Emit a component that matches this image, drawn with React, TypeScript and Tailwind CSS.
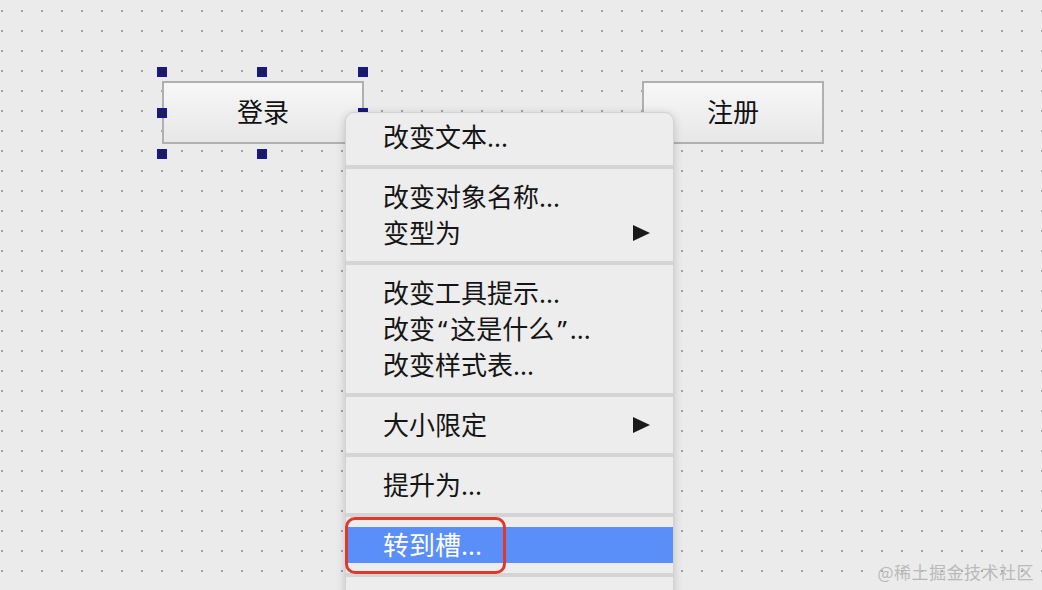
import React from 'react'

type Item = { label: string; submenu?: boolean; active?: boolean }

const sections: Item[][] = [
  [{ label: '改变文本...' }],
  [{ label: '改变对象名称...' }, { label: '变型为', submenu: true }],
  [{ label: '改变工具提示...' }, { label: '改变“这是什么”...' }, { label: '改变样式表...' }],
  [{ label: '大小限定', submenu: true }],
  [{ label: '提升为...' }],
  [{ label: '转到槽...', active: true }],
  [{ label: '' }],
]

const font = { fontFamily: '"Noto Sans", "Noto Sans CJK SC", sans-serif' }

// curly quotes get a little air around them, like the mac menu font
function Label({ text }: { text: string }) {
  const parts = text.split(/([“”])/)
  return (
    <span>
      {parts.map((p, i) =>
        p === '“' || p === '”' ? (
          <span key={i} className="px-[3px]">
            {p}
          </span>
        ) : (
          p
        )
      )}
    </span>
  )
}

function Handle({ className }: { className: string }) {
  return (
    <div className={`absolute w-[10px] h-[10px] bg-[#16169a] p-[2px] ${className}`}>
      <div className="w-full h-full bg-[#1e1e4a]" />
    </div>
  )
}

function FormButton({ label, className }: { label: string; className: string }) {
  return (
    <div
      className={`flex items-center justify-center border-2 border-[#b0b0b0] bg-gradient-to-b from-[#f7f7f7] to-[#e7e7e7] text-[26px] text-[#111] ${className}`}
    >
      {label}
    </div>
  )
}

function SubArrow() {
  return (
    <svg width="17" height="16" viewBox="0 0 17 16" className="shrink-0">
      <polygon points="0,0 17,8 0,16" fill="#1a1a1a" />
    </svg>
  )
}

function ContextMenu() {
  return (
    <div className="absolute left-[345px] top-[112px] w-[329px] h-[520px] rounded-t-[9px] bg-[#ededed] border border-[#d2d2d2] shadow-[0_2px_10px_rgba(0,0,0,0.18)] pt-[6px] overflow-hidden">
      {sections.map((items, si) => (
        <div key={si}>
          {si > 0 && (
            <div className="h-[24px] flex items-center">
              <div className="h-[4px] w-full bg-[#d4d4d4]" />
            </div>
          )}
          {items.map((item) => (
            <div
              key={item.label}
              className={`h-[36px] flex items-center justify-between pl-[37px] pr-[23px] text-[26px] leading-none ${
                item.active ? 'bg-[#5a8ef8] text-white' : 'text-[#151515]'
              }`}
            >
              <Label text={item.label} />
              {item.submenu && <SubArrow />}
            </div>
          ))}
        </div>
      ))}
    </div>
  )
}

export default function App() {
  return (
    <div
      className="relative w-[1042px] h-[590px] overflow-hidden bg-[#ebebeb] bg-[radial-gradient(circle,#a3a3a3_1px,transparent_1.4px)] bg-[size:20px_20px] bg-[position:-8px_1px]"
      style={font}
    >
      {/* form widgets on the designer canvas */}
      <div className="absolute left-[162px] top-[81px]">
        <FormButton label="登录" className="w-[202px] h-[63px]" />
        {/* selection handles */}
        <Handle className="-left-[5px] -top-[14px]" />
        <Handle className="left-[95px] -top-[14px]" />
        <Handle className="left-[196px] -top-[14px]" />
        <Handle className="-left-[5px] top-[27px]" />
        <Handle className="left-[196px] top-[27px]" />
        <Handle className="-left-[5px] top-[68px]" />
        <Handle className="left-[95px] top-[68px]" />
        <Handle className="left-[196px] top-[68px]" />
      </div>
      <FormButton label="注册" className="absolute left-[642px] top-[81px] w-[182px] h-[63px]" />

      <ContextMenu />

      {/* red annotation box */}
      <div className="absolute left-[345px] top-[517px] w-[161px] h-[57px] rounded-[10px] border-[3px] border-[#e0392c]" />

      <div className="absolute right-[8px] bottom-[6px] text-[17px] text-[#b9b9b9] tracking-[0.5px]" style={{ fontFamily: '"Noto Sans CJK SC", sans-serif' }}>
        @稀土掘金技术社区
      </div>
    </div>
  )
}
